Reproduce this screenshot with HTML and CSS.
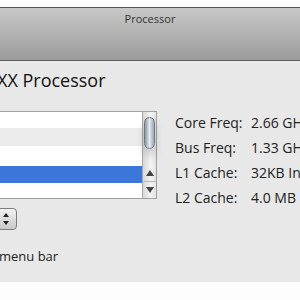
FILE: index.html
```html
<!DOCTYPE html>
<html lang="en">
<head>
    <meta charset="UTF-8">
    <title>Processor</title>
    <link rel="stylesheet" href="styles.css">
</head>
<body>
    <!-- Preferences window, cropped on the left -->
    <div class="window">
        <div class="titlebar">Processor</div>
        <div class="content">
            <h1 class="cpu-name">XX Processor</h1>

            <div class="main-row">
                <!-- Core list with scroller -->
                <div class="list-box">
                    <div class="rows">
                        <div class="row"></div>
                        <div class="row alt"></div>
                        <div class="row"></div>
                        <div class="row selected"></div>
                        <div class="row"></div>
                    </div>
                    <div class="scroller">
                        <div class="thumb"></div>
                        <div class="arrows">
                            <div class="arrow up"></div>
                            <div class="arrow down"></div>
                        </div>
                    </div>
                </div>

                <!-- Details -->
                <div class="info">
                    <div class="info-row"><span class="label">Core Freq:</span><span class="value">2.66 GHz</span></div>
                    <div class="info-row"><span class="label">Bus Freq:</span><span class="value">1.33 GHz</span></div>
                    <div class="info-row"><span class="label">L1 Cache:</span><span class="value">32KB Instruction</span></div>
                    <div class="info-row"><span class="label">L2 Cache:</span><span class="value">4.0 MB</span></div>
                </div>
            </div>

            <div class="stepper">
                <svg width="8" height="16" viewBox="0 0 8 16">
                    <path d="M4 2 L7 6 L1 6 Z" fill="#222"/>
                    <path d="M4 14 L7 10 L1 10 Z" fill="#222"/>
                </svg>
            </div>

            <div class="menu-option">menu bar</div>
        </div>
    </div>
</body>
</html>
```

FILE: styles.css
```css
body {
    margin: 0;
    background: #fdfdfd;
    font-family: "Open Sans", "DejaVu Sans", sans-serif;
    color: #222;
    overflow: hidden;
}
.window {
    margin-top: 7px;
    margin-left: -20px;
    width: 340px;
    border-top: 1px solid #555;
    box-shadow: 0 5px 5px rgba(0, 0, 0, 0.75);
}
.titlebar {
    height: 53px;
    background: linear-gradient(#c8c8c8, #9b9b9b);
    border-bottom: 1px solid #5c5c5c;
    text-align: center;
    font-size: 11px;
    line-height: 22px;
    color: #333;
    box-sizing: border-box;
}
.content {
    height: 221px;
    background: #e8e8e8;
    padding-left: 20px;
    overflow: hidden;
}
.cpu-name {
    margin: 8px 0 0 -3px;
    font-size: 18px;
    font-weight: normal;
    line-height: 22px;
    color: #111;
}
.main-row {
    display: flex;
    margin-top: 20px;
    height: 88px;
}
.list-box {
    flex: none;
    display: flex;
    width: 178px;
    margin-left: -21px;
    border: 1px solid #a0a0a0;
    border-left: none;
    box-sizing: border-box;
    background: #fff;
}
.rows {
    flex: 1;
    display: grid;
    grid-template-rows: 16px 18px 20px 17px 1fr;
}
.row {
    background: #fff;
}
.row.alt {
    background: #ececec;
}
.row.selected {
    background: #3a77d8;
}
.scroller {
    width: 14px;
    border-left: 1px solid #a8a8a8;
    background: linear-gradient(90deg, #d8d8d8, #f4f4f4 60%, #e2e2e2);
    display: flex;
    flex-direction: column;
    padding-top: 5px;
    box-sizing: border-box;
}
.thumb {
    height: 30px;
    margin: 0 1px;
    border-radius: 7px;
    border: 1px solid #6d7782;
    background: linear-gradient(90deg, #8a96a2, #e4eaf0 50%, #9aa6b2);
    box-shadow: 0 6px 8px rgba(0, 0, 0, 0.18);
}
.arrows {
    margin-top: auto;
}
.arrow {
    height: 16px;
    position: relative;
}
.arrow.down {
    border-top: 1px solid #b8b8b8;
}
.arrow::after {
    content: "";
    position: absolute;
    left: 3px;
    top: 5px;
    border-left: 4px solid transparent;
    border-right: 4px solid transparent;
}
.arrow.up::after {
    border-bottom: 6px solid #444;
}
.arrow.down::after {
    border-top: 6px solid #444;
}
.info {
    margin: -1px 0 0 18px;
    font-size: 14px;
    white-space: nowrap;
}
.info-row {
    display: flex;
    height: 25px;
    line-height: 25px;
}
.label {
    width: 76px;
}
.stepper {
    margin: 9px 0 0 -25px;
    width: 42px;
    height: 22px;
    box-sizing: border-box;
    border: 1px solid #7d7d7d;
    border-radius: 4px;
    background: linear-gradient(#f2f2f2, #c9c9c9);
    display: flex;
    justify-content: flex-end;
    align-items: center;
    padding-right: 6px;
}
.menu-option {
    margin: 18px 0 0 -1px;
    font-size: 13px;
    line-height: 16px;
}
```
